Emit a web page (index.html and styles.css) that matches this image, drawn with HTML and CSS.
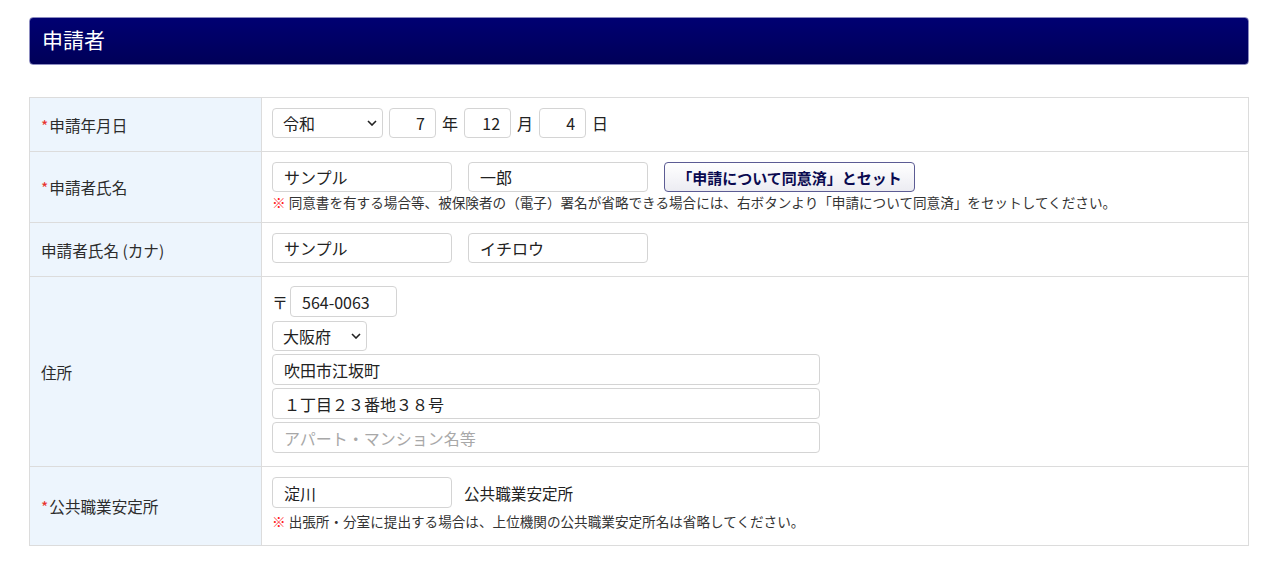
FILE: index.html
```html
<!DOCTYPE html>
<html lang="ja">
<head>
<meta charset="utf-8">
<title>申請者</title>
<link rel="stylesheet" href="styles.css">
</head>
<body>
<div class="page">
  <h2 class="section-title">申請者</h2>
  <table class="form-table">
    <tr class="row-date">
      <th><span class="req">*</span>申請年月日</th>
      <td>
        <div class="line">
          <div class="select-wrap era">
            <select class="select"><option>令和</option></select>
            <svg class="chev" viewBox="0 0 10 6" width="10" height="6"><path d="M1 1l4 4 4-4" fill="none" stroke="#222" stroke-width="1.6"/></svg>
          </div>
          <input class="input num" value="7">
          <span class="unit">年</span>
          <input class="input num" value="12">
          <span class="unit">月</span>
          <input class="input num" value="4">
          <span class="unit">日</span>
        </div>
      </td>
    </tr>
    <tr class="row-name">
      <th><span class="req">*</span>申請者氏名</th>
      <td>
        <div class="line wide-gap">
          <input class="input name" value="サンプル">
          <input class="input name" value="一郎">
          <button class="set-btn" type="button">「申請について同意済」とセット</button>
        </div>
        <p class="note"><span class="mark">※</span> 同意書を有する場合等、被保険者の（電子）署名が省略できる場合には、右ボタンより「申請について同意済」をセットしてください。</p>
      </td>
    </tr>
    <tr class="row-kana">
      <th>申請者氏名 (カナ)</th>
      <td>
        <div class="line wide-gap">
          <input class="input name" value="サンプル">
          <input class="input name" value="イチロウ">
        </div>
      </td>
    </tr>
    <tr class="row-addr">
      <th>住所</th>
      <td>
        <div class="addr">
          <div class="line zip-line">
            <span class="zip-mark">〒</span>
            <input class="input zip" value="564-0063">
          </div>
          <div class="select-wrap pref">
            <select class="select"><option>大阪府</option></select>
            <svg class="chev" viewBox="0 0 10 6" width="10" height="6"><path d="M1 1l4 4 4-4" fill="none" stroke="#222" stroke-width="1.6"/></svg>
          </div>
          <input class="input addr-input" value="吹田市江坂町">
          <input class="input addr-input" value="１丁目２３番地３８号">
          <input class="input addr-input" placeholder="アパート・マンション名等">
        </div>
      </td>
    </tr>
    <tr class="row-office">
      <th><span class="req">*</span>公共職業安定所</th>
      <td>
        <div class="line office-line">
          <input class="input name" value="淀川">
          <span class="suffix">公共職業安定所</span>
        </div>
        <p class="note office-note"><span class="mark">※</span> 出張所・分室に提出する場合は、上位機関の公共職業安定所名は省略してください。</p>
      </td>
    </tr>
  </table>
</div>
</body>
</html>
```

FILE: styles.css
```css
* { box-sizing: border-box; }

body {
  margin: 0;
  background: #fff;
  color: #333;
  font-family: "Noto Sans CJK JP", "Noto Sans", sans-serif;
}

.page {
  padding: 17px 31px 0 29px;
}

.section-title {
  margin: 0;
  height: 48px;
  padding-left: 12px;
  border: 1px solid #8c8cc0;
  border-radius: 4px;
  background: linear-gradient(#000072, #000058);
  color: #fff;
  font-size: 21px;
  font-weight: normal;
  line-height: 43px;
}

.form-table {
  margin-top: 32px;
  width: 100%;
  border-collapse: collapse;
}

.form-table th,
.form-table td {
  border: 1px solid #dcdcdc;
}

.form-table th {
  width: 232px;
  padding: 0 11px;
  background: #edf5fd;
  color: #2c2c2c;
  font-size: 15.6px;
  font-weight: normal;
  text-align: left;
  vertical-align: middle;
}

.form-table td {
  padding: 10px 10px 13px;
  vertical-align: top;
}

.row-name td { padding: 9px 10px 11px; }
.row-addr td { padding: 9px 10px 13px; }
.row-office td { padding: 10px 10px 15px; }

.req {
  color: #e8322c;
  margin-right: 1px;
}

.line {
  display: flex;
  align-items: center;
  gap: 6px;
}

.wide-gap {
  gap: 16px;
}

.input {
  height: 30px;
  padding: 0 11px;
  border: 1px solid #d4d4d4;
  border-radius: 4px;
  background: #fff;
  color: #222;
  font-family: inherit;
  font-size: 16px;
  outline: none;
}

.input::placeholder {
  color: #a8a8a8;
}

.num {
  width: 47px;
  text-align: right;
  padding-right: 10px;
}

.unit {
  font-size: 16px;
  color: #222;
}

.select-wrap {
  position: relative;
  display: inline-block;
}

.select {
  display: block;
  appearance: none;
  -webkit-appearance: none;
  height: 30px;
  padding: 0 24px 0 10px;
  border: 1px solid #d4d4d4;
  border-radius: 4px;
  background: #fff;
  color: #222;
  font-family: inherit;
  font-size: 16px;
}

.era .select { width: 111px; }
.pref .select { width: 95px; }

.chev {
  position: absolute;
  right: 6px;
  top: 12px;
  pointer-events: none;
}

.name { width: 180px; }

.set-btn {
  width: 251px;
  height: 30px;
  margin-top: 1px;
  border: 1px solid #5c5c94;
  border-radius: 4px;
  background: linear-gradient(#ffffff, #ececf2);
  color: #0a0a50;
  font-family: inherit;
  font-size: 15px;
  font-weight: bold;
}

.note {
  margin: 2px 0 0;
  font-size: 13.6px;
  line-height: 17px;
  color: #333;
}

.mark {
  color: #ff1a1a;
  font-weight: bold;
}

.addr {
  display: flex;
  flex-direction: column;
  align-items: flex-start;
  gap: 3px;
}

.zip-line { gap: 2px; margin-bottom: 1px; }

.zip-mark {
  font-size: 16px;
  color: #222;
}

.zip { width: 107px; height: 31px; }

.addr-input {
  width: 548px;
  height: 31px;
}

.office-line { gap: 12px; }

.office-line .input { height: 31px; }

.suffix {
  font-size: 15.6px;
  color: #222;
}

.office-note {
  margin-top: 4px;
  line-height: 18px;
}
```
